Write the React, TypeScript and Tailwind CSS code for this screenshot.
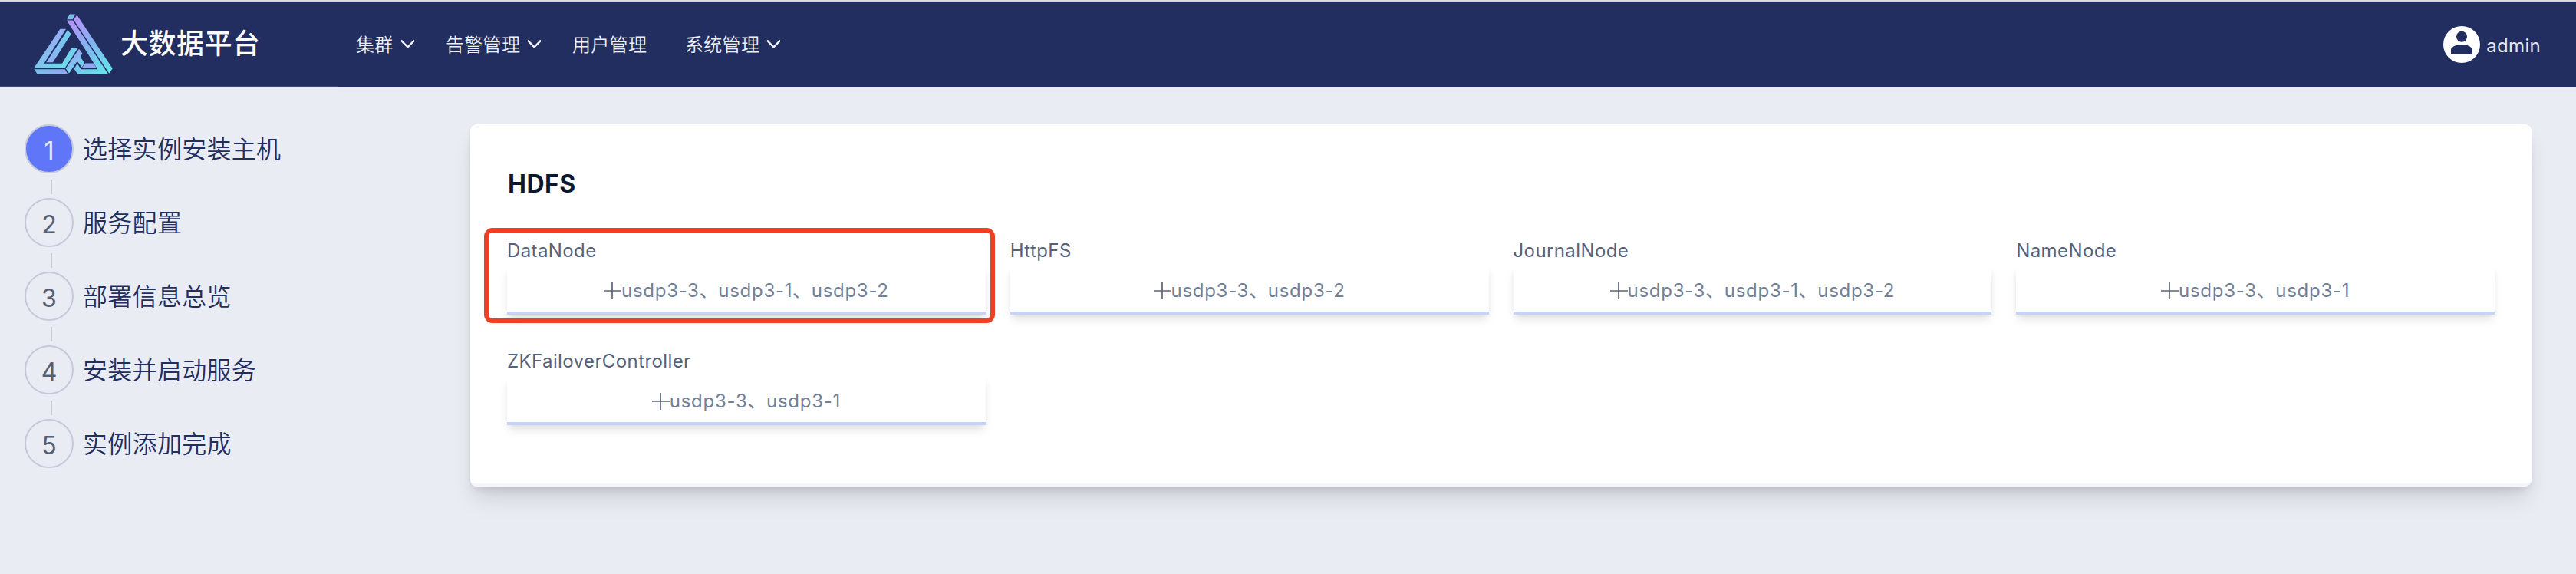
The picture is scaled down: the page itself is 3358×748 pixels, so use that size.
import React from "react";

const menus = [
  { label: "集群", arrow: true, width: "w-[117px]" },
  { label: "告警管理", arrow: true, width: "w-[165px]" },
  { label: "用户管理", arrow: false, width: "w-[147px]" },
  { label: "系统管理", arrow: true, width: "w-[160px]" },
];

const steps = ["选择实例安装主机", "服务配置", "部署信息总览", "安装并启动服务", "实例添加完成"];

const roles = [
  { name: "DataNode", hosts: "usdp3-3、usdp3-1、usdp3-2", marked: true },
  { name: "HttpFS", hosts: "usdp3-3、usdp3-2" },
  { name: "JournalNode", hosts: "usdp3-3、usdp3-1、usdp3-2" },
  { name: "NameNode", hosts: "usdp3-3、usdp3-1" },
  { name: "ZKFailoverController", hosts: "usdp3-3、usdp3-1" },
];

function Logo() {
  return (
    <svg className="mt-px h-[79px] w-[103px] shrink-0" viewBox="132 53 309 236">
      <defs>
        <linearGradient id="cap" x1="0" y1="1" x2="1" y2="0">
          <stop offset="0" stopColor="#6cc9e8" />
          <stop offset="1" stopColor="#8fb0f2" />
        </linearGradient>
        <linearGradient id="beam" gradientUnits="userSpaceOnUse" x1="270" y1="70" x2="410" y2="285">
          <stop offset="0" stopColor="#bd8ffb" />
          <stop offset="0.5" stopColor="#82b4f1" />
          <stop offset="1" stopColor="#66e3ea" />
        </linearGradient>
        <linearGradient id="left" gradientUnits="userSpaceOnUse" x1="190" y1="130" x2="270" y2="250">
          <stop offset="0" stopColor="#9da4f6" />
          <stop offset="1" stopColor="#69deea" />
        </linearGradient>
        <linearGradient id="inner" gradientUnits="userSpaceOnUse" x1="270" y1="120" x2="195" y2="242">
          <stop offset="0" stopColor="#6fcfec" />
          <stop offset="1" stopColor="#8fb0f4" />
        </linearGradient>
        <linearGradient id="base" gradientUnits="userSpaceOnUse" x1="133" y1="0" x2="266" y2="0">
          <stop offset="0" stopColor="#74c4ec" />
          <stop offset="1" stopColor="#93a8f4" />
        </linearGradient>
        <linearGradient id="mid" gradientUnits="userSpaceOnUse" x1="285" y1="205" x2="325" y2="262">
          <stop offset="0" stopColor="#9ba6f6" />
          <stop offset="1" stopColor="#6bdcea" />
        </linearGradient>
      </defs>
      <polygon fill="url(#cap)" points="272,54 295,54 284,74 262,74" />
      <polygon fill="url(#beam)" points="301,57 440,266 427,286 288,76" />
      <polygon fill="url(#beam)" points="261,78 284,78 423,288 303,288 290,268 302,247 317,269 382,269" />
      <polygon fill="url(#base)" points="334,246 366,246 378,264 320,264" />
      <polygon fill="url(#left)" points="235,112 258,112 172,247 243,247 279,186 305,186 254,264 133,264" />
      <polygon fill="url(#inner)" points="264,116 278,131 207,242 181,242" />
      <polygon fill="url(#base)" points="133,269 254,269 265,288 146,288" />
      <polygon fill="url(#mid)" points="309,190 322,207 315,222 331,245 320,262 302,238 270,285 257,266" />
    </svg>
  );
}

function Chevron() {
  return (
    <svg className="mb-[2px] ml-[8px] h-[14px] w-[21px]" viewBox="0 0 22 14" fill="none">
      <path d="M2 2.5 L11 11.5 L20 2.5" stroke="#f4f5f9" strokeWidth="2.6" />
    </svg>
  );
}

function Avatar() {
  return (
    <svg className="size-12" viewBox="0 0 48 48">
      <circle cx="24" cy="24" r="24" fill="#fff" />
      <circle cx="24" cy="13.8" r="7" fill="#212e5f" />
      <path d="M10 37 V30 C12 26 18 24 24 24 S36 26 38 30 V37 Z" fill="#212e5f" />
    </svg>
  );
}

function Plus() {
  return (
    <svg className="mt-[6px] h-[22px] w-[23px]" viewBox="0 0 23 22">
      <path d="M0 11 H23 M11 0 V22" stroke="#5b6679" strokeWidth="1.7" />
    </svg>
  );
}

export default function App() {
  return (
    <div className="h-[748px] w-[3358px] overflow-hidden bg-[#eaecf4] font-['Inter','Noto_Sans_CJK_SC',sans-serif]">
      <header className="flex h-[114px] border-t-2 border-[#d9dade] bg-[#212e5f]">
        <div className="flex w-[440px] border-b-2 border-[#424b75] pt-[15px] pl-[44px]">
          <Logo />
          <h1 className="mt-[13px] ml-[10px] text-[36px] leading-[54px] font-medium tracking-[0.5px] whitespace-nowrap text-white">
            大数据平台
          </h1>
        </div>
        <nav className="flex flex-1 items-center pl-[24px] text-[24px] font-[350] tracking-[0.3px] text-[#edeff5]">
          {menus.map((m) => (
            <div key={m.label} className={`flex shrink-0 items-center whitespace-nowrap ${m.width}`}>
              <span className="pt-px">{m.label}</span>
              {m.arrow && <Chevron />}
            </div>
          ))}
        </nav>
        <div className="flex items-center gap-[8px] pr-[46px] text-[24px] font-normal tracking-[0.3px] text-[#e4e7ee]">
          <Avatar />
          <span className="mt-[3px]">admin</span>
        </div>
      </header>

      <main className="flex pt-[48px]">
        <ol className="w-[613px] shrink-0 pl-[32px]">
          {steps.map((s, i) => (
            <li key={s}>
              <div className="flex items-center">
                <span
                  className={`flex size-16 items-center justify-center rounded-full border-2 border-[#c5cad9] pt-[6px] text-[32px] ${
                    i === 0 ? "bg-[#6076f8] text-[#eaecf5]" : "text-[#566074]"
                  }`}
                >
                  {i + 1}
                </span>
                <span className="mt-[2px] ml-[12px] text-[32px] leading-[48px] font-[350] tracking-[0.3px] whitespace-nowrap text-[#212e5f]">
                  {s}
                </span>
              </div>
              {i < steps.length - 1 && <div className="mt-[8px] mb-[5px] ml-[34px] h-[19px] w-[2px] bg-[#c5cad9]" />}
            </li>
          ))}
        </ol>

        <section className="h-[472px] w-[2687px] rounded-lg border-b-4 border-[#f5f6fd] bg-white px-12 pt-[54px] shadow-[0_20px_30px_-6px_rgba(0,0,0,0.13),0_8px_12px_-4px_rgba(0,0,0,0.1),0_0_3px_rgba(0,0,0,0.08)]">
          <h2 className="pl-px text-[32px] leading-[48px] font-bold tracking-[0.5px] text-[#0d1730]">HDFS</h2>
          <div className="mt-[42px] grid grid-cols-4 gap-x-8 gap-y-[40px]">
            {roles.map((r) => (
              <div key={r.name} className="relative h-[104px]">
                <div className="h-[40px] pt-px text-[24px] leading-[40px] tracking-[0.4px] text-[#56617a]">{r.name}</div>
                <div className="flex h-16 items-center justify-center border-b-4 border-[#c5d3f6] bg-white text-[24px] tracking-[0.7px] text-[#718096] shadow-[0_8px_12px_-2px_rgba(0,0,0,0.1),0_4px_8px_-2px_rgba(0,0,0,0.06)]">
                  <Plus />
                  <span className="mt-[6px] whitespace-nowrap">{r.hosts}</span>
                </div>
                {r.marked && (
                  <div className="absolute top-[-9px] left-[-30px] h-[124px] w-[666px] rounded-[11px] border-[6px] border-[#ed4024]" />
                )}
              </div>
            ))}
          </div>
        </section>
      </main>
    </div>
  );
}
